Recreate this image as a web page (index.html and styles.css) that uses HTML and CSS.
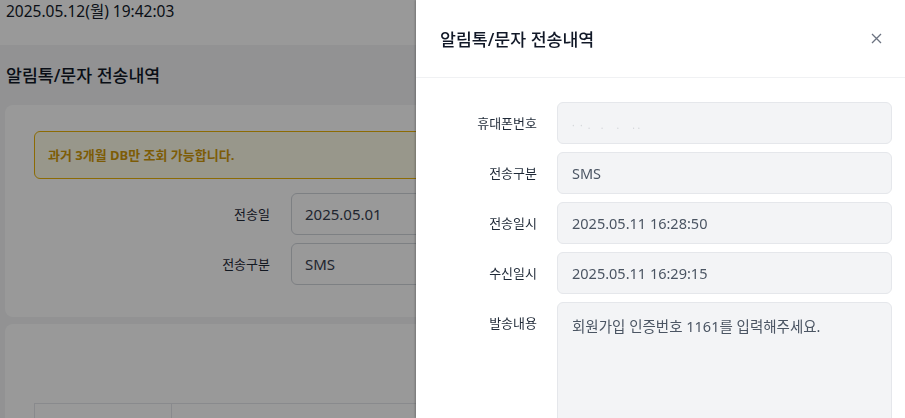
FILE: index.html
```html
<!DOCTYPE html>
<html lang="ko">
<head>
<meta charset="utf-8">
<title>알림톡/문자 전송내역</title>
<link rel="stylesheet" href="styles.css">
</head>
<body>
<div class="page">
  <header class="topbar">2025.05.12(월) 19:42:03</header>
  <main class="main">
    <h1 class="page-title">알림톡/문자 전송내역</h1>
    <section class="card">
      <div class="alert">과거 3개월 DB만 조회 가능합니다.</div>
      <div class="search-form">
        <label class="s-label">전송일</label>
        <div class="s-input">2025.05.01</div>
        <label class="s-label">전송구분</label>
        <div class="s-input">SMS</div>
      </div>
    </section>
    <section class="card card-list">
      <div class="table">
        <div class="cell c1"></div>
        <div class="cell c2"></div>
      </div>
    </section>
  </main>
</div>

<div class="overlay"></div>

<aside class="drawer">
  <div class="drawer-head">
    <h2 class="drawer-title">알림톡/문자 전송내역</h2>
    <button class="close" aria-label="닫기">
      <svg width="11" height="11" viewBox="0 0 11 11"><path d="M1 1L10 10M10 1L1 10" stroke="#6b7280" stroke-width="1.3" fill="none"/></svg>
    </button>
  </div>
  <div class="drawer-body">
    <div class="d-label">휴대폰번호</div>
    <div class="d-field"><span class="masked">·&nbsp;&nbsp;·&nbsp;&nbsp;.&nbsp;&nbsp;&nbsp;&nbsp;.&nbsp;&nbsp;&nbsp;&nbsp;&nbsp;.&nbsp;&nbsp;&nbsp;&nbsp;&nbsp;.&nbsp;.</span></div>
    <div class="d-label">전송구분</div>
    <div class="d-field">SMS</div>
    <div class="d-label">전송일시</div>
    <div class="d-field">2025.05.11 16:28:50</div>
    <div class="d-label">수신일시</div>
    <div class="d-field">2025.05.11 16:29:15</div>
    <div class="d-label">발송내용</div>
    <div class="d-field d-area">회원가입 인증번호 1161를 입력해주세요.</div>
  </div>
</aside>
</body>
</html>
```

FILE: styles.css
```css
* { box-sizing: border-box; }
html, body { margin: 0; padding: 0; }
body {
  width: 905px;
  height: 418px;
  overflow: hidden;
  font-family: "Noto Sans", "Noto Sans CJK KR", sans-serif;
  color: #111827;
  background: #f3f4f6;
}
.page { display: flex; flex-direction: column; }
.topbar {
  height: 45px;
  background: #fff;
  padding: 1px 6px 0;
  font-size: 15.5px;
  line-height: 20px;
  color: #111827;
}
.main { padding: 0 5px; }
.page-title {
  margin: 0;
  padding: 18px 1px 0;
  height: 60px;
  font-size: 17.3px;
  line-height: 26px;
  font-weight: 500;
  color: #111827;
}
.card {
  background: #fff;
  border-radius: 8px;
  padding: 26px 29px 0;
  height: 212px;
}
.alert {
  height: 48px;
  border: 1px solid #eab308;
  border-radius: 6px;
  background: #fefce8;
  color: #d19a0a;
  font-weight: 700;
  font-size: 13px;
  line-height: 46px;
  padding-left: 13px;
}
.search-form {
  margin-top: 14px;
  display: grid;
  grid-template-columns: 236px 1fr;
  column-gap: 21px;
  row-gap: 8px;
}
.s-label {
  text-align: right;
  font-size: 13px;
  line-height: 42px;
  color: #1f2937;
}
.s-input {
  height: 42px;
  border: 1px solid #d1d5db;
  border-radius: 6px;
  background: #fff;
  padding-left: 13px;
  font-size: 15px;
  line-height: 40px;
  color: #374151;
}
.card-list {
  margin-top: 7px;
  height: 120px;
  padding-top: 79px;
}
.table {
  display: flex;
  border-top: 1px solid #e5e7eb;
  border-left: 1px solid #e5e7eb;
  height: 40px;
}
.cell { border-right: 1px solid #e5e7eb; }
.c1 { width: 137px; }
.c2 { flex: 1; }

.overlay {
  position: fixed;
  inset: 0;
  background: rgba(0, 0, 0, 0.4);
}
.drawer {
  position: fixed;
  top: 0;
  right: 0;
  bottom: 0;
  width: 489px;
  background: #fff;
  box-shadow: -1px 0 2px rgba(0, 0, 0, 0.25);
}
.drawer-head {
  height: 78px;
  border-bottom: 1px solid #f0f1f3;
  display: flex;
  align-items: center;
  justify-content: space-between;
  padding: 0 22px 0 24px;
}
.drawer-title {
  margin: 0;
  font-size: 17.3px;
  font-weight: 500;
  color: #111827;
}
.close {
  border: 0;
  background: transparent;
  padding: 0;
  width: 14px;
  height: 14px;
  display: flex;
  align-items: center;
  justify-content: center;
  cursor: pointer;
}
.drawer-body {
  padding: 24px 13px 0 24px;
  display: grid;
  grid-template-columns: 97px 1fr;
  column-gap: 20px;
  row-gap: 8px;
}
.d-label {
  text-align: right;
  font-size: 13px;
  line-height: 42px;
  color: #1f2937;
}
.d-field {
  height: 42px;
  border: 1px solid #e5e7eb;
  border-radius: 6px;
  background: #f3f4f6;
  padding-left: 14px;
  font-size: 14.5px;
  line-height: 40px;
  color: #4b5563;
}
.d-area {
  height: 140px;
  padding-top: 3px;
}
.masked { color: #d4d6da; font-size: 10px; }
```
